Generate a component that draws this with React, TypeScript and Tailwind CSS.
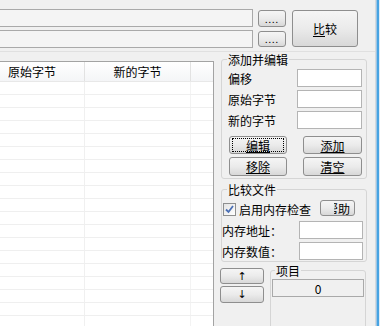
import React from "react";

const font = "font-['Noto_Sans_CJK_SC','Liberation_Sans',sans-serif] text-[12px] leading-[13px] text-black";
const btn =
  "flex items-center justify-center rounded-[3px] border border-[#8e8e8e] bg-linear-to-b from-[#f5f5f5] via-[#ebebeb] to-[#d8d8d8] shrink-0";
const field = "shrink-0 border border-[#b4b4b4] bg-white";
const group = "border border-[#d5d5d5] rounded-[3px] shrink-0";

function Row({ label, pl, mr, w }: { label: string; pl: string; mr: string; w: string }) {
  return (
    <div className="flex h-[18px] items-center">
      <span className={pl}>{label}</span>
      <div className={`ml-auto h-[18px] ${w} ${mr} ${field}`} />
    </div>
  );
}

export default function App() {
  const rows = Array.from({ length: 20 }, (_, i) => i);
  return (
    <div className={`flex h-[326px] w-[380px] overflow-hidden bg-[#f0f0f0] ${font}`}>
      <div className="flex w-[375px] shrink-0 flex-col">
        {/* top: file paths + compare */}
        <div className="flex h-[52px] shrink-0 border-b border-[#e0e0e0] pt-[9px]">
          <div className="-ml-[2px] flex w-[255px] shrink-0 flex-col gap-[3px]">
            <div className="h-[18px] border border-[#a9a9a9] bg-[#f4f4f4]" />
            <div className="h-[18px] border border-[#a9a9a9] bg-[#f4f4f4]" />
          </div>
          <div className="ml-[5px] flex w-[28px] shrink-0 flex-col">
            <div className={`mt-[1px] h-[17px] ${btn} items-end pb-[2px] text-[9px] leading-[9px] tracking-[1px]`}>....</div>
            <div className={`mt-[4px] h-[16px] ${btn} items-end pb-[2px] text-[9px] leading-[9px] tracking-[1px]`}>....</div>
          </div>
          <div className={`ml-[6px] mt-[1px] h-[37px] w-[66px] ${btn}`}>
            <span>
              <span className="underline underline-offset-[2px]">比</span>较
            </span>
          </div>
        </div>

        <div className="flex flex-1">
          {/* list view */}
          <div className="-ml-[2px] mt-[9px] h-[280px] w-[216px] shrink-0 overflow-hidden border border-[#a3a3a3] bg-white">
            <div className="flex h-[20px] border-b border-[#e8e8e8] bg-linear-to-b from-white to-[#f4f5f7]">
              <div className="flex w-[86px] shrink-0 items-center border-r border-[#e2e2e2] pl-[9px]">原始字节</div>
              <div className="flex w-[106px] shrink-0 items-center justify-center border-r border-[#e2e2e2]">新的字节</div>
              <div className="flex-1" />
            </div>
            {rows.map((r) => (
              <div key={r} className="flex h-[13px] border-b border-[#efefef]">
                <div className="w-[86px] shrink-0 border-r border-[#f0f0f0]" />
                <div className="w-[106px] shrink-0 border-r border-[#f3f3f3]" />
              </div>
            ))}
          </div>

          {/* right panel */}
          <div className="ml-[6px] flex w-[155px] shrink-0 flex-col">
            <fieldset className={`ml-[1px] mt-[1px] w-[146px] ${group} pb-[2px]`}>
              <legend className="ml-[5px] px-[1px]">添加并编辑</legend>
              <div className="flex flex-col gap-[3px] pt-[3px]">
                <Row label="偏移" pl="pl-[6px]" mr="mr-[4px]" w="w-[65px]" />
                <Row label="原始字节" pl="pl-[6px]" mr="mr-[4px]" w="w-[65px]" />
                <Row label="新的字节" pl="pl-[6px]" mr="mr-[4px]" w="w-[65px]" />
                <div className="mt-[4px] flex">
                  <div className={`ml-[7px] h-[18px] w-[58px] ${btn} border-[#3c7fb1] from-[#eaf6fd] via-[#d9f0fc] to-[#bee6fd]`}>
                    <span className="flex h-[12px] w-[50px] items-center justify-center outline outline-1 outline-dotted outline-black">
                      <span className="underline underline-offset-[1px]">编辑</span>
                    </span>
                  </div>
                  <div className={`ml-auto mr-[4px] h-[18px] w-[59px] ${btn}`}>
                    <span className="underline underline-offset-[1px]">添加</span>
                  </div>
                </div>
                <div className="flex">
                  <div className={`ml-[7px] h-[19px] w-[58px] ${btn}`}>
                    <span className="underline underline-offset-[1px]">移除</span>
                  </div>
                  <div className={`ml-auto mr-[4px] h-[19px] w-[59px] ${btn}`}>
                    <span className="underline underline-offset-[1px]">清空</span>
                  </div>
                </div>
              </div>
            </fieldset>

            <fieldset className={`ml-[1px] mt-[4px] w-[146px] ${group} pb-[1px]`}>
              <legend className="ml-[5px] px-[1px]">比较文件</legend>
              <div className="flex flex-col">
                <div className="mt-[4px] flex h-[16px] items-center">
                  <div className="ml-[1px] mt-[2px] flex h-[13px] w-[13px] shrink-0 items-center justify-center border border-[#8e8f8f] bg-linear-to-br from-[#e4e4e4] to-white">
                    <svg width="9" height="9" viewBox="0 0 9 9">
                      <path d="M1 4.5 L3.5 7 L8 1" fill="none" stroke="#4a6fb5" strokeWidth="1.8" />
                    </svg>
                  </div>
                  <span className="ml-[3px] mt-[2px]">启用内存检查</span>
                  <div className={`ml-auto mr-[11px] h-[16px] w-[35px] ${btn} justify-end pr-[4px]`}>
                    <span className="flex w-[16px] justify-end overflow-hidden whitespace-nowrap">帮助</span>
                  </div>
                </div>
                <div className="mt-[5px]">
                  <Row label="内存地址：" pl="pl-0" mr="mr-[3px]" w="w-[64px]" />
                </div>
                <div className="mt-[3px]">
                  <Row label="内存数值：" pl="pl-0" mr="mr-[3px]" w="w-[64px]" />
                </div>
              </div>
            </fieldset>

            <div className="mt-[2px] flex">
              <div className="mt-[4px] flex w-[44px] shrink-0 flex-col">
                <div className={`h-[16px] ${btn} font-['DejaVu_Sans',sans-serif] text-[11px]`}>↑</div>
                <div className={`mt-[2px] h-[17px] ${btn} font-['DejaVu_Sans',sans-serif] text-[11px]`}>↓</div>
              </div>
              <fieldset className={`ml-[6px] h-[80px] w-[96px] ${group}`}>
                <legend className="ml-[4px] px-[1px]">项目</legend>
                <div className="ml-[1px] mt-[2px] flex h-[18px] w-[92px] items-center justify-center border border-[#a9a9a9] bg-[#f0f0f0]">
                  0
                </div>
              </fieldset>
            </div>
          </div>
        </div>
      </div>
      {/* window edge */}
      <div className="flex shrink-0">
        <div className="w-[1px] bg-[#d4d9de]" />
        <div className="w-[1px] bg-[#9cc6e6]" />
        <div className="w-[2px] bg-[#47a3e2]" />
        <div className="w-[1px] bg-[#dcebf7]" />
      </div>
    </div>
  );
}
